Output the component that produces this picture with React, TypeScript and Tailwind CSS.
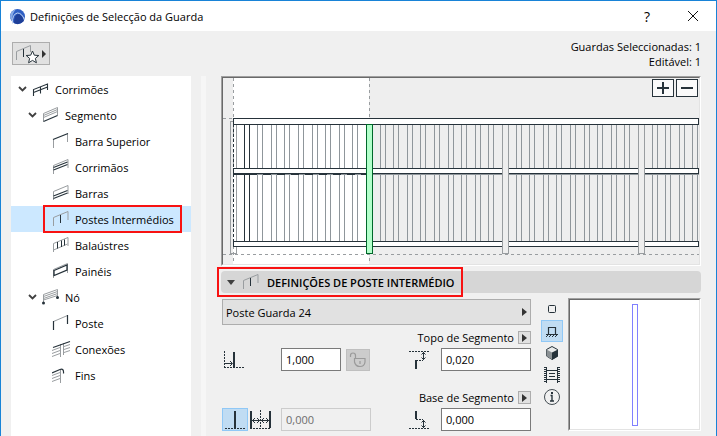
import { useState } from "react";
import type { ReactNode } from "react";

interface TreeItem {
  id: string;
  label: string;
  level: 0 | 1 | 2;
  branch?: boolean;
  icon: ReactNode;
}

const DARK = "#26323a";
const GRAY = "#999da0";

const frame = <path d="M1.5 16V7.5L16 1.5V10" stroke={GRAY} />;

const treeItems: TreeItem[] = [
  {
    id: "corrimoes",
    label: "Corrimões",
    level: 0,
    branch: true,
    icon: <path d="M1.5 16V9.5L15.5 4V10M1.5 12.5L15.5 7M8.5 6.5V13.5" stroke={DARK} strokeWidth="1.1" />,
  },
  {
    id: "segmento",
    label: "Segmento",
    level: 1,
    branch: true,
    icon: (
      <>
        <path d="M1.5 15.5V7.5L15.5 1.5V9.5M1.5 9.5L15.5 3.5M1.5 11.5L15.5 5.5" stroke={GRAY} />
        <path d="M1.5 15.5L15.5 9.5" stroke={DARK} strokeWidth="1.2" />
      </>
    ),
  },
  {
    id: "barra-superior",
    label: "Barra Superior",
    level: 2,
    icon: (
      <>
        <path d="M1.5 7.5V16M15.5 1.5V10" stroke={GRAY} />
        <path d="M1 7.5L16 1.5" stroke={DARK} strokeWidth="1.2" />
      </>
    ),
  },
  {
    id: "corrimaos",
    label: "Corrimãos",
    level: 2,
    icon: (
      <>
        {frame}
        <path d="M1.5 9.5L15.5 4M1.5 12L15.5 6.5" stroke={DARK} strokeWidth="1.1" />
      </>
    ),
  },
  {
    id: "barras",
    label: "Barras",
    level: 2,
    icon: (
      <>
        {frame}
        <path d="M1.5 12L15.5 6.5M1.5 14.5L15.5 9" stroke={DARK} strokeWidth="1.1" />
      </>
    ),
  },
  {
    id: "postes",
    label: "Postes Intermédios",
    level: 2,
    icon: (
      <>
        {frame}
        <path d="M8.5 5V13" stroke={DARK} />
      </>
    ),
  },
  {
    id: "balaustres",
    label: "Balaústres",
    level: 2,
    icon: (
      <>
        {frame}
        <path d="M1.5 14L15.5 8" stroke={GRAY} />
        <path d="M5.5 6V12.5M9.5 4.5V11M12.5 3.5V9.5" stroke={DARK} />
      </>
    ),
  },
  {
    id: "paineis",
    label: "Painéis",
    level: 2,
    icon: (
      <>
        <path d="M1.5 16V7.5L15.5 1.5V11" stroke={GRAY} />
        <path d="M2 8.5L15 3V8L2 13.5Z" stroke={DARK} strokeWidth="1.3" />
      </>
    ),
  },
  {
    id: "no",
    label: "Nó",
    level: 1,
    branch: true,
    icon: (
      <>
        <path d="M1.5 15V6.5L15.5 1.5V9M1.5 8.5L15.5 3.5M1.5 10.5L15.5 5.5M1.5 12L15.5 7.5" stroke={GRAY} />
        <circle cx="1.5" cy="15" r="1.5" fill={DARK} />
        <circle cx="15.5" cy="9.5" r="1.5" fill={DARK} />
      </>
    ),
  },
  {
    id: "poste",
    label: "Poste",
    level: 2,
    icon: (
      <>
        <path d="M1.5 7.5L15.5 1.5" stroke={GRAY} />
        <path d="M1.5 7V16M15.5 1V10" stroke={DARK} strokeWidth="1.2" />
      </>
    ),
  },
  {
    id: "conexoes",
    label: "Conexões",
    level: 2,
    icon: (
      <>
        <path
          d="M8.5 4V17M11.5 3V15M0 10.5L8 7.5M0 13.5L8 10.5M0 16.5L8 13.5M12 6.5L18 4.5M12 9.5L18 7.5M12 12.5L18 10.5"
          stroke={GRAY}
        />
        <path d="M1 7.5L18 1.5" stroke={DARK} strokeWidth="1.2" />
      </>
    ),
  },
  {
    id: "fins",
    label: "Fins",
    level: 2,
    icon: (
      <>
        <path d="M8.5 4V17M0 9.5L8 6.5M0 12.5L8 9.5M0 15.5L8 12.5" stroke={GRAY} />
        <path d="M0 7L8 3.5Q12 2 11.5 7.5" stroke={DARK} strokeWidth="1.2" />
      </>
    ),
  },
];

const levelPadding = ["pl-[7px]", "pl-[17px]", "pl-[27px]"];

// baluster offsets inside one 136 unit segment
const balusters = [21, 34, 48, 61, 75, 89, 102, 116, 129];
const segments = [0, 136, 272, 408];

function RailingPreview() {
  const lines = segments.flatMap((s) =>
    balusters.flatMap((b) => [s + b + 0.5, s + b + 5.5])
  );

  return (
    <svg
      className="block w-full h-[186px]"
      viewBox="0 0 476 186"
      preserveAspectRatio="xMinYMin slice"
      fill="none"
      shapeRendering="crispEdges"
    >
      <rect x="10" width="136" height="186" fill="#fff" />
      <g stroke={GRAY} strokeDasharray="3 3">
        <path d="M10.5 0V186M146.5 0V186M0 40.5H10M0 176.5H476" />
      </g>
      <rect x="7.5" y="43.5" width="6" height="132" stroke={GRAY} />
      <path d="M10.5 46V170" stroke={DARK} strokeDasharray="3 2" />
      {lines
        .filter((x) => x < 475)
        .map((x) => (
          <path key={x} d={`M${x} 47V163`} stroke={x < 30 ? DARK : "#8f969b"} />
        ))}
      <path d="M474.5 47V163" stroke="#8f969b" />
      <g fill="#fff" stroke={DARK}>
        <rect x="10.5" y="40.5" width="465" height="6" />
        <rect x="10.5" y="90.5" width="465" height="5" />
        <rect x="10.5" y="163.5" width="465" height="5" />
      </g>
      <path d="M146 96.5H476" stroke="#8f969b" />
      <path d="M10 96.5H146" stroke={DARK} />
      <path d="M34 96.5H146" stroke="#8f969b" strokeDasharray="6 8" />
      <g fill="#eeeeee" stroke={GRAY}>
        <path d="M279.5 47V175.5H285.5V47" />
        <path d="M415.5 47V175.5H421.5V47" />
      </g>
      <rect x="143.5" y="46.5" width="6" height="129" fill="#b3ffcb" stroke="#00682a" />
    </svg>
  );
}

function Sunken({ className, children }: { className: string; children: ReactNode }) {
  return (
    <div className={`border border-t-[#a0a0a0] border-l-[#a0a0a0] border-r-white border-b-white ${className}`}>
      <div className="relative border border-t-[#696969] border-l-[#696969] border-r-[#e3e3e3] border-b-[#e3e3e3]">
        {children}
      </div>
    </div>
  );
}

function ArrowButton({ label }: { label: string }) {
  return (
    <button
      aria-label={label}
      className="w-[13px] h-[13px] flex items-center justify-center border border-[#adadad] bg-[#e1e1e1]"
    >
      <svg width="5" height="8" viewBox="0 0 5 8">
        <path d="M0 0L5 4L0 8Z" fill="#333" />
      </svg>
    </button>
  );
}

const tools = [
  {
    id: "2d",
    label: "Símbolo 2D",
    icon: <rect x="7.5" y="7.5" width="7" height="7" rx="1" stroke={DARK} />,
  },
  {
    id: "front",
    label: "Vista frontal",
    icon: (
      <>
        <path d="M7.5 14V7.5H14.5V14M5 14.5H17" stroke={DARK} strokeWidth="1.2" />
        <path d="M5 17L7 15M8 17L10 15M11 17L13 15M14 17L16 15" stroke={DARK} />
      </>
    ),
  },
  {
    id: "3d",
    label: "Vista 3D",
    icon: (
      <>
        <path d="M11 4.5L16.5 7.5V14L11 17.5L5.5 14V7.5Z" fill="#e8eaea" stroke={DARK} />
        <path d="M11 10.5L5.5 7.5V14L11 17.5Z" fill="#8b9194" />
        <path d="M11 10.5L17 7.5V14.5L11 18Z" fill={DARK} />
      </>
    ),
  },
  {
    id: "preview",
    label: "Pré-visualização",
    icon: (
      <>
        <path d="M5.5 3V19M16.5 3V19M6 6.5H16M6 15.5H16M8 9.5H14M8 12.5H14" stroke={DARK} />
        <path d="M4 3V19M18 3V19" stroke={DARK} strokeWidth="2" strokeDasharray="1 1" />
      </>
    ),
  },
  {
    id: "info",
    label: "Informação",
    icon: (
      <>
        <circle cx="11" cy="11" r="7.5" stroke="#444d53" />
        <path d="M9.5 9.5H11V15M9 15H13" stroke={DARK} strokeWidth="1.4" />
        <rect x="10" y="6" width="2" height="2" fill={DARK} />
      </>
    ),
  },
];

export default function App() {
  const [selected, setSelected] = useState("postes");
  const [view, setView] = useState("front");
  const [distance, setDistance] = useState("1,000");
  const [top, setTop] = useState("0,020");
  const [base, setBase] = useState("0,000");

  return (
    <div className="min-h-screen flex flex-col bg-[#f0f0f0] border-t border-x border-[#1883d7] font-['Open_Sans','Noto_Sans',sans-serif] text-[11px] leading-[13px] text-black">
      {/* Title bar */}
      <header className="h-[30px] shrink-0 flex items-center bg-white pl-2 pr-4">
        <svg width="17" height="17" viewBox="0 0 17 17" fill="none" className="mr-1">
          <circle cx="8.5" cy="8.5" r="7.5" fill="#2f5fc4" />
          <path d="M1 9A7.5 7.5 0 0 1 7 1.2Q3 5 3 13Z" fill="#86a9e6" />
          <path d="M5 15Q5 7 9 6Q13 6 15 13Q10 18 5 15Z" fill="#1e3f98" />
          <path d="M3.5 15.5Q3 6 8.500 5Q13 5 15.500 12" stroke="#c3d4f2" />
        </svg>
        <h1 className="flex-1">Definições de Selecção da Guarda</h1>
        <button aria-label="Ajuda" className="w-6 mr-7 text-[14px]">
          ?
        </button>
        <button aria-label="Fechar" className="w-[13px]">
          <svg width="12" height="12" viewBox="0 0 12 12" stroke="#111">
            <path d="M1 1L11 11M11 1L1 11" />
          </svg>
        </button>
      </header>

      {/* Toolbar */}
      <div className="h-[45px] shrink-0 flex items-center justify-between pl-[11px] pr-[15px]">
        <button
          aria-label="Favoritos"
          className="w-[38px] h-[23px] border border-[#adadad] bg-[#e1e1e1]"
        >
          <svg width="36" height="21" viewBox="0 0 36 21" fill="none">
            <path d="M3.5 17V8.5L17.5 2.5V9" stroke={GRAY} />
            <path d="M10.5 6V14" stroke={DARK} />
            <path
              d="M19.5 8L21.3 12.2L25.8 12.5L22.4 15.4L23.4 19.8L19.5 17.4L15.6 19.8L16.6 15.4L13.2 12.5L17.7 12.2Z"
              fill="#fff"
              stroke={DARK}
            />
            <path d="M29 7L33 11L29 15Z" fill="#333" />
          </svg>
        </button>
        <div className="text-right leading-[15px]">
          <p>Guardas Seleccionadas: 1</p>
          <p>Editável: 1</p>
        </div>
      </div>

      <div className="flex-1 flex pl-[10px] pr-[15px]">
        {/* Tree */}
        <nav className="w-[180px] shrink-0 bg-white">
          {treeItems.map((item) => (
            <button
              key={item.id}
              onClick={() => setSelected(item.id)}
              className={`relative w-full h-[26px] flex items-center text-left whitespace-nowrap ${
                levelPadding[item.level]
              } ${selected === item.id ? "bg-[#cce8ff]" : ""}`}
            >
              <svg width="9" height="6" viewBox="0 0 9 6" fill="none" className="mr-[5px]">
                {item.branch && <path d="M1 1L4.5 4.5L8 1" stroke="#404040" strokeWidth="1.8" />}
              </svg>
              <svg width="20" height="18" viewBox="0 0 20 18" fill="none" className="mr-[3px]">
                {item.icon}
              </svg>
              {item.label}
              {item.id === "postes" && (
                <span className="absolute left-8 -inset-y-px w-[139px] border-2 border-[#f81212]" />
              )}
            </button>
          ))}
        </nav>
        <div className="w-[5px] shrink-0 ml-[10px] bg-[#f6f6f6]" />

        <main className="flex-1 min-w-0 ml-[15px]">
          <Sunken className="bg-[#eeeeee]">
            <RailingPreview />
            <div className="absolute top-px right-px flex gap-[2px]">
              <button
                aria-label="Ampliar"
                className="w-[22px] h-[18px] flex items-center justify-center border border-[#26323a] bg-[#fafafa]"
              >
                <svg width="12" height="12" viewBox="0 0 12 12" stroke={DARK} strokeWidth="2">
                  <path d="M0 6H12M6 0V12" />
                </svg>
              </button>
              <button
                aria-label="Reduzir"
                className="w-[22px] h-[18px] flex items-center justify-center border border-[#26323a] bg-[#fafafa]"
              >
                <svg width="12" height="12" viewBox="0 0 12 12" stroke={DARK} strokeWidth="2">
                  <path d="M0 6H12" />
                </svg>
              </button>
            </div>
          </Sunken>

          {/* Section header */}
          <button className="relative w-full h-[22px] mt-[5px] pl-[6px] flex items-center rounded bg-[#d6d6d6]">
            <svg width="8" height="5" viewBox="0 0 8 5" className="mr-[7px]">
              <path d="M0 0H8L4 5Z" fill="#404040" />
            </svg>
            <svg width="20" height="18" viewBox="0 0 20 18" fill="none" className="mr-[5px]">
              {frame}
              <path d="M8.5 5V13" stroke={DARK} />
            </svg>
            <span className="font-semibold">DEFINIÇÕES DE POSTE INTERMÉDIO</span>
            <span className="absolute -left-1 -inset-y-1 w-[246px] border-2 border-[#f81212]" />
          </button>

          <div className="flex mt-[5px] pl-px">
            <div className="flex-1 mt-px">
              <div className="relative">
                <select
                  aria-label="Tipo de poste"
                  className="block w-full h-[26px] pl-[3px] appearance-none border border-[#adadad] bg-[#e1e1e1]"
                >
                  <option>Poste Guarda 24</option>
                </select>
                <svg
                  width="5"
                  height="8"
                  viewBox="0 0 5 8"
                  className="absolute right-1 top-[9px] pointer-events-none"
                >
                  <path d="M0 0L5 4L0 8Z" fill="#333" />
                </svg>
              </div>

              <div className="flex items-center justify-end gap-1 mt-[6px]">
                <label htmlFor="top">Topo de Segmento</label>
                <ArrowButton label="Opções de topo" />
              </div>
              <div className="flex items-center mt-1">
                <svg width="24" height="23" viewBox="0 0 24 23" fill="none" className="mr-[35px]" stroke={DARK}>
                  <path d="M2.5 3V19M2 19.5H22" strokeDasharray="2 1" />
                  <path d="M12 4V19" strokeWidth="2" />
                  <path d="M3 15.5H10M8 13L10.5 15.5L8 18" />
                </svg>
                <input
                  aria-label="Distância"
                  value={distance}
                  onChange={(e) => setDistance(e.target.value)}
                  className="w-[60px] h-[23px] px-1 border border-[#7a7a7a] bg-white"
                />
                <button
                  aria-label="Bloquear"
                  disabled
                  className="w-6 h-[22px] ml-[5px] flex items-center justify-center border border-[#bfbfbf] bg-[#cccccc]"
                >
                  <svg width="18" height="16" viewBox="0 0 18 16" fill="none" stroke="#9a9a9a" strokeWidth="1.2">
                    <path d="M1.5 5V3.5Q1.5 1 4 1T6.5 3.5V6.5" />
                    <path d="M5.5 6.5H16V10Q15.5 14.5 11 14.5T5.5 10ZM11 9V12" />
                  </svg>
                </button>
                <svg width="20" height="20" viewBox="0 0 20 20" fill="none" className="ml-auto mr-3" stroke={DARK}>
                  <path d="M0 1.5H20M7 10.5H14" strokeDasharray="2 1" />
                  <path d="M7 10V19" strokeWidth="2" />
                  <path d="M14.5 2V10M12.5 4.5L14.5 2.5L16.5 4.5M12.5 7.5L14.5 9.5L16.5 7.5" />
                </svg>
                <input
                  id="top"
                  value={top}
                  onChange={(e) => setTop(e.target.value)}
                  className="w-[90px] h-[23px] px-1 border border-[#7a7a7a] bg-white"
                />
              </div>

              <div className="flex items-center justify-end gap-1 mt-5">
                <label htmlFor="base">Base de Segmento</label>
                <ArrowButton label="Opções de base" />
              </div>
              <div className="flex items-center mt-1">
                <button aria-label="Um poste" className="w-[26px] h-[23px] border border-[#90c8f6] bg-[#c0dcf3]">
                  <svg width="24" height="21" viewBox="0 0 24 21" fill="none" stroke={DARK}>
                    <path d="M2 19.5H22" strokeDasharray="2 1" />
                    <path d="M12 2V19" strokeWidth="2" />
                  </svg>
                </button>
                <button aria-label="Dois postes" className="w-6 h-[23px] mr-[9px]">
                  <svg width="24" height="23" viewBox="0 0 24 23" fill="none" stroke={DARK}>
                    <path d="M2 20.5H22M12.5 2V20" strokeDasharray="2 1" />
                    <path d="M3 3V20M22 3V20" strokeWidth="2" />
                    <path d="M4 12.5H21M7 10L4.5 12.5L7 15M9 10L11.5 12.5L9 15M16 10L13.5 12.5L16 15M18 10L20.5 12.5L18 15" />
                  </svg>
                </button>
                <input
                  aria-label="Afastamento"
                  disabled
                  value="0,000"
                  className="w-[90px] h-[23px] px-1 border border-[#cccccc] bg-[#f0f0f0] text-[#6d6d6d]"
                />
                <svg width="20" height="20" viewBox="0 0 20 20" fill="none" className="ml-auto mr-3" stroke={DARK}>
                  <path d="M0 18.5H20M7 9.5H14" strokeDasharray="2 1" />
                  <path d="M7 1V9" strokeWidth="2" />
                  <path d="M14.5 10V18M12.5 12.5L14.5 10.5L16.5 12.5M12.5 15.5L14.5 17.5L16.5 15.5" />
                </svg>
                <input
                  id="base"
                  value={base}
                  onChange={(e) => setBase(e.target.value)}
                  className="w-[90px] h-[23px] px-1 border border-[#7a7a7a] bg-white"
                />
              </div>
            </div>

            {/* View switcher */}
            <div className="flex flex-col ml-[10px] mr-[5px]">
              {tools.map((tool) => (
                <button
                  key={tool.id}
                  aria-label={tool.label}
                  onClick={() => setView(tool.id)}
                  className={`w-[22px] h-[22px] flex items-center justify-center border ${
                    view === tool.id ? "border-[#90c8f6] bg-[#c0dcf3]" : "border-transparent"
                  }`}
                >
                  <svg width="22" height="22" viewBox="0 0 22 22" fill="none" className="shrink-0">
                    {tool.icon}
                  </svg>
                </button>
              ))}
            </div>

            <Sunken className="w-[133px] h-[133px] bg-white">
              <svg className="block w-full" viewBox="0 0 129 129" fill="none">
                <rect x="62.5" y="4.5" width="5" height="121" stroke="#8080ff" />
              </svg>
            </Sunken>
          </div>
        </main>
      </div>
    </div>
  );
}
